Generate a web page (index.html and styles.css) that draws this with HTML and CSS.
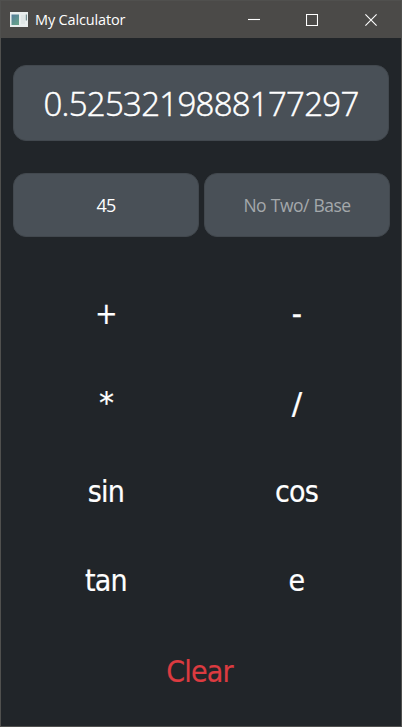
FILE: index.html
```html
<!DOCTYPE html>
<html lang="en">
<head>
<meta charset="utf-8">
<title>My Calculator</title>
<link rel="stylesheet" href="styles.css">
</head>
<body>
<div class="window">
  <header class="titlebar">
    <svg class="app-icon" width="18" height="15" viewBox="0 0 18 15">
      <defs><linearGradient id="pane" x1="0" y1="0" x2="0.6" y2="1"><stop offset="0" stop-color="#547c9c"/><stop offset="1" stop-color="#65a08b"/></linearGradient></defs>
      <path fill="#e9eeee" d="M0 0h18v15H0z"/>
      <path fill="url(#pane)" d="M1.500 2.500h7.500v10.500h-7.500z"/>
      <path fill="#dfe6e6" d="M11 3h4v9h-4z"/>
      <path fill="#55777a" d="M15.800 2.500h1v6h-1z"/>
    </svg>
    <h1 class="title">My Calculator</h1>
    <div class="controls">
      <svg width="12" height="12" viewBox="0 0 12 12"><path d="M0 5.500h12"/></svg>
      <svg width="12" height="12" viewBox="0 0 12 12"><path d="M.5.5h11v11H.5z"/></svg>
      <svg width="12" height="12" viewBox="0 0 12 12"><path d="M.4.4l11.200 11.200M11.600.4L.4 11.600"/></svg>
    </div>
  </header>
  <main class="calculator">
    <output class="field result"><span>0.5253219888177297</span></output>
    <div class="inputs">
      <div class="field first"><span>45</span></div>
      <div class="field placeholder"><span>No Two/ Base</span></div>
    </div>
    <div class="keys">
      <button>+</button><button class="minus">-</button>
      <button class="times">*</button><button class="divide">/</button>
      <button>sin</button><button>cos</button>
      <button>tan</button><button>e</button>
      <button class="clear">Clear</button>
    </div>
  </main>
</div>
</body>
</html>
```
FILE: styles.css
```css
* { box-sizing: border-box; }
body { margin: 0; }
.window {
  width: 402px;
  height: 727px;
  border: 1px solid #50504e;
  background: #212529;
  color: #fff;
  font-family: "Open Sans", "Noto Sans", sans-serif;
  overflow: hidden;
}
.titlebar {
  height: 37px;
  padding: 0 24px 0 9px;
  display: flex;
  align-items: center;
  background: #4b4a48;
}
.title {
  margin: 0 0 0 7px;
  font-size: 14.5px;
  font-weight: 400;
  letter-spacing: -0.15px;
  white-space: nowrap;
}
.controls {
  margin-left: auto;
  display: flex;
  gap: 46px;
}
.controls svg {
  fill: none;
  stroke: #fff;
  stroke-width: 1.1;
}
.controls svg:last-child { margin-left: 1px; }
.calculator { padding: 27px 11px 0 12px; }
.field {
  display: flex;
  align-items: center;
  justify-content: center;
  border: 1px solid #42484e;
  border-radius: 13px;
  background: #495057;
  white-space: nowrap;
}
.result {
  width: 376px;
  height: 76px;
  font-size: 33px;
  font-weight: 300;
  letter-spacing: -0.72px;
  -webkit-text-stroke: 0.5px #fff;
}
.inputs {
  margin-top: 32px;
  display: grid;
  grid-template-columns: 186px 186px;
  gap: 5px;
  font-size: 18px;
}
.inputs .field { height: 64px; }
.first { letter-spacing: -0.8px; }
.placeholder {
  color: #a4a8ab;
  font-size: 17.5px;
  letter-spacing: -0.55px;
  word-spacing: 0.8px;
}
.keys {
  margin-top: 32px;
  display: grid;
  grid-template-columns: 186px 195px;
  grid-auto-rows: 89px;
}
.keys button {
  padding: 0;
  border: 0;
  background: none;
  color: #fff;
  font: 30px "DejaVu Sans Condensed", "DejaVu Sans", sans-serif;
  letter-spacing: -0.8px;
  -webkit-text-stroke: 0.2px currentColor;
}
.keys .minus { -webkit-text-stroke: 0.6px currentColor; }
.keys .times { font-family: "DejaVu Sans", sans-serif; }
.keys .divide { font-family: "DejaVu Sans", sans-serif; font-size: 31px; }
.keys .clear {
  grid-column: 1 / 3;
  padding: 4px 8px 0 0;
  color: #dc3b40;
}
```
